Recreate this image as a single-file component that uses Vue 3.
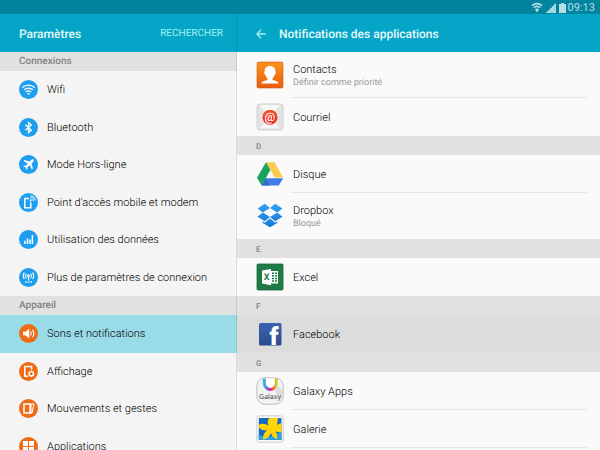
<script setup>
const groups = [
  {
    title: 'Connexions',
    tone: 'blue',
    items: [
      { icon: 'wifi', label: 'Wifi' },
      { icon: 'bluetooth', label: 'Bluetooth' },
      { icon: 'plane', label: 'Mode Hors-ligne' },
      { icon: 'hotspot', label: "Point d'accès mobile et modem" },
      { icon: 'data', label: 'Utilisation des données' },
      { icon: 'more', label: 'Plus de paramètres de connexion' }
    ]
  },
  {
    title: 'Appareil',
    tone: 'orange',
    items: [
      { icon: 'sound', label: 'Sons et notifications', active: true },
      { icon: 'display', label: 'Affichage' },
      { icon: 'motion', label: 'Mouvements et gestes' },
      { icon: 'apps', label: 'Applications' }
    ]
  }
]

const sections = [
  {
    letter: '',
    apps: [
      { icon: 'contacts', name: 'Contacts', note: 'Définir comme priorité' },
      { icon: 'mail', name: 'Courriel' }
    ]
  },
  {
    letter: 'D',
    apps: [
      { icon: 'drive', name: 'Disque' },
      { icon: 'dropbox', name: 'Dropbox', note: 'Bloqué' }
    ]
  },
  { letter: 'E', apps: [{ icon: 'excel', name: 'Excel' }] },
  { letter: 'F', apps: [{ icon: 'facebook', name: 'Facebook', active: true }] },
  {
    letter: 'G',
    apps: [
      { icon: 'galaxy', name: 'Galaxy Apps' },
      { icon: 'gallery', name: 'Galerie' }
    ]
  }
]
</script>

<template>
  <div class="screen">
    <div class="status">
      <svg class="status-wifi" viewBox="0 0 12 11" aria-hidden="true">
        <path d="M1 3.6Q6 -.4 11 3.6" fill="none" stroke="#b4dde4" stroke-width="1.8" />
        <path d="M2.6 5.7Q6 3 9.4 5.7" fill="none" stroke="#b4dde4" stroke-width="1.7" />
        <path d="M4 7.3Q6 5.8 8 7.3L6 10.5Z" fill="#b4dde4" />
      </svg>
      <svg class="status-signal" viewBox="0 0 10 10" aria-hidden="true">
        <path d="M10 0V10H0Z" fill="#8cc9d4" />
        <path d="M1 8.6V10M3 6.8V10M5 5V10M7 3V10M9 1V10" stroke="#b4dde4" stroke-width="1.3" />
      </svg>
      <svg class="status-battery" viewBox="0 0 7 10" aria-hidden="true">
        <path d="M2 0H5V1H7V10H0V1H2Z" fill="#b4dde4" />
      </svg>
      <time>09:13</time>
    </div>

    <div class="panes">
      <nav class="settings">
        <header class="bar settings-bar">
          <h1>Paramètres</h1>
          <button type="button" class="search">RECHERCHER</button>
        </header>
        <section v-for="group in groups" :key="group.title">
          <h2 class="group-title">{{ group.title }}</h2>
          <ul class="menu" :class="group.tone">
            <li v-for="item in group.items" :key="item.label">
              <a href="#" class="menu-item" :class="{ active: item.active }">
                <span class="disc">
                  <svg viewBox="0 0 19 19" fill="none" stroke="#fff" stroke-width="1.3" aria-hidden="true">
                    <template v-if="item.icon === 'wifi'">
                      <path d="M3.2 7.6Q9.5 2.6 15.8 7.6M5 9.8Q9.5 6.3 14 9.8M6.8 11.9Q9.5 9.9 12.2 11.9" />
                      <path d="M8 13.4Q9.5 12.4 11 13.4L9.5 15Z" fill="#fff" stroke="none" />
                    </template>
                    <path v-else-if="item.icon === 'bluetooth'" d="M6.4 6.7L12.3 12.2L9.5 14.6V4.4L12.3 6.9L6.4 12.3" />
                    <path v-else-if="item.icon === 'plane'" fill="#fff" stroke="none" d="M14.6 4.4C13.9 3.8 12.8 4.4 12.1 5.1L10.7 6.5L5.5 5.1L4.5 6.1L8.8 8.5L6.9 10.7L5 10.5L4.2 11.3L6.6 12.5L7.8 14.9L8.6 14.1L8.4 12.2L10.6 10.3L12.9 14.6L13.9 13.6L12.6 8.4L14 7C14.7 6.2 15.2 5.1 14.6 4.4Z" />
                    <template v-else-if="item.icon === 'hotspot'">
                      <path d="M10 5.5H5.8V14.8H11.8V9.5" stroke-width="1.5" />
                      <path d="M11.2 6.4Q12.8 6.5 13 8.1M11.2 4.4Q14.5 4.6 14.9 8.1M11.4 2.6Q16 3 16.6 7.4" stroke-width=".9" />
                      <circle cx="11.2" cy="8" r=".8" fill="#fff" stroke="none" />
                    </template>
                    <path v-else-if="item.icon === 'data'" d="M6 14V10.8M8.5 14V8.6M11 14V9.6M13.4 14V5" stroke-width="1.5" />
                    <template v-else-if="item.icon === 'more'">
                      <path d="M7.3 10.2Q5.9 7.8 7.3 5.5M11.7 10.2Q13.1 7.8 11.7 5.5M5.3 11Q3.3 7.8 5.3 4.5M13.7 11Q15.7 7.8 13.7 4.5" stroke-width="1.1" />
                      <path d="M9.5 8V12.5" />
                      <circle cx="9.5" cy="7.4" r="1.2" fill="#fff" stroke="none" />
                      <path d="M6 14H7.5M8.8 14H10.2M11.5 14H13" stroke-width="1.5" />
                    </template>
                    <template v-else-if="item.icon === 'sound'">
                      <path d="M4 7.8H6.4L10.2 4.5V14.5L6.4 11.3H4Z" fill="#fff" stroke="none" />
                      <path d="M11.6 7.4Q13 9.5 11.6 11.6M13.6 5.9Q16 9.5 13.6 13.1" stroke-width="1.2" />
                    </template>
                    <template v-else-if="item.icon === 'display'">
                      <path d="M12.6 7.5V4.5H5.8V14.2H9" stroke-width="1.5" />
                      <circle cx="12.2" cy="11.8" r="2.2" stroke-width="1.3" />
                      <path d="M12.2 8.5V10M12.2 13.6V15.1M8.9 11.8H10.4M14 11.8H15.5M9.9 9.5L11 10.6M13.4 13L14.5 14.1M14.5 9.5L13.4 10.6M11 13L9.9 14.1" stroke-width=".8" />
                    </template>
                    <template v-else-if="item.icon === 'motion'">
                      <rect x="5" y="5" width="6" height="9" stroke-width="1.5" />
                      <path d="M12 5H14.8L13.2 13.5L12 14.3Z" stroke-width="1.1" />
                    </template>
                    <path v-else fill="#fff" stroke="none" d="M4 4H9V9H4ZM10 4H15V9H10ZM4 10H9V15H4ZM10 10H15V15H10Z" />
                  </svg>
                </span>
                <span class="menu-label">{{ item.label }}</span>
              </a>
            </li>
          </ul>
        </section>
      </nav>

      <main class="detail">
        <header class="bar detail-bar">
          <button type="button" class="back" aria-label="Retour">
            <svg viewBox="0 0 10 10" aria-hidden="true">
              <path d="M5 .8L.9 5L5 9.2M1 5H9.6" fill="none" stroke="#a5f1ee" stroke-width="1.3" />
            </svg>
          </button>
          <h2>Notifications des applications</h2>
        </header>
        <section v-for="section in sections" :key="section.letter">
          <h3 v-if="section.letter" class="letter">{{ section.letter }}</h3>
          <ul class="apps">
            <li v-for="app in section.apps" :key="app.name">
              <a href="#" class="app" :class="{ active: app.active, tall: app.note }">
                <svg class="app-icon" viewBox="0 0 28 28" aria-hidden="true">
                  <g v-if="app.icon === 'contacts'">
                    <defs>
                      <linearGradient id="contactsFill" x2="0" y2="1">
                        <stop stop-color="#f9921e" />
                        <stop offset="1" stop-color="#ee5c0c" />
                      </linearGradient>
                    </defs>
                    <rect x="1" y="1" width="26" height="26" rx="1.5" fill="url(#contactsFill)" stroke="#c95e18" stroke-width=".6" />
                    <path d="M14 5C17.6 5 19.7 7.3 19.4 10.8C20.2 11.2 19.8 13 18.9 13.4C18.4 15.2 17.6 16.4 16.6 17.2V18.7C18.5 19.9 22 19.7 22.6 22.4H5.4C6 19.7 9.5 19.9 11.4 18.7V17.2C10.4 16.4 9.6 15.2 9.1 13.4C8.2 13 7.8 11.2 8.6 10.8C8.3 7.3 10.4 5 14 5Z" fill="#fff" />
                  </g>
                  <g v-else-if="app.icon === 'mail'">
                    <rect x="1" y="1" width="26" height="26" rx="2.5" fill="#ececec" stroke="#c4c4c4" stroke-width=".8" />
                    <path d="M2 3L12 14L2 25Z" fill="#e2e2e2" />
                    <path d="M26 3L16 14L26 25Z" fill="#e2e2e2" />
                    <path d="M2.5 1.6H25.5L14 14Z" fill="#f9f9f9" stroke="#cfcfcf" stroke-width=".6" />
                    <path d="M2.5 26L14 14L25.5 26Z" fill="#f5f5f5" stroke="#cfcfcf" stroke-width=".6" />
                    <circle cx="14" cy="14.3" r="7.4" fill="#f0281a" />
                    <path d="M6.6 14.3A7.4 7.4 0 0 1 21.4 14.3Z" fill="#f6482a" />
                    <text x="14" y="17.6" text-anchor="middle" font-size="12" font-weight="500" fill="#fff">@</text>
                  </g>
                  <g v-else-if="app.icon === 'drive'">
                    <path d="M10 2.3H18.5L27 17.6H18.7Z" fill="#fdcc48" />
                    <path d="M10 2.3L14.3 9.9L5.7 25.6L1 17.8Z" fill="#1aa260" />
                    <path d="M9.7 18.2H27.2L22.8 25.6H5.7Z" fill="#3f7ee8" />
                    <path d="M5.7 25.6L9.7 18.2L14 25.6Z" fill="#3269c8" />
                  </g>
                  <g v-else-if="app.icon === 'dropbox'">
                    <defs>
                      <linearGradient id="boxFill" x2="0" y2="1">
                        <stop stop-color="#35a1f2" />
                        <stop offset="1" stop-color="#1278d8" />
                      </linearGradient>
                    </defs>
                    <path d="M8.8 1.8L14 6.1L6.8 10.6L1.5 6.4ZM19.2 1.8L14 6.1L21.2 10.6L26.5 6.4ZM1.5 14.8L6.8 10.6L14 15L8.8 19.3ZM26.5 14.8L21.2 10.6L14 15L19.2 19.3ZM6.7 19.3L8.8 20.7L14 16.4L19.2 20.7L21.3 19.3V20.9L14 25.3L6.7 20.9Z" fill="url(#boxFill)" />
                  </g>
                  <g v-else-if="app.icon === 'excel'">
                    <rect x="1" y="1" width="26" height="26" rx="1" fill="#1f7a45" stroke="#17683a" stroke-width=".8" />
                    <rect x="14.5" y="8" width="7.5" height="12.5" fill="#fff" />
                    <path d="M16 10.2H18M19 10.2H21M16 12.8H18M19 12.8H21M16 15.4H18M19 15.4H21M16 18H18M19 18H21" stroke="#1f7a45" stroke-width="1.5" />
                    <path d="M6 7.6L15 5.9V22.3L6 20.6Z" fill="#fff" />
                    <text x="10.5" y="17.4" text-anchor="middle" font-size="9" font-weight="700" fill="#1f7a45">X</text>
                  </g>
                  <g v-else-if="app.icon === 'facebook'">
                    <defs>
                      <linearGradient id="fbFill" x2="0" y2="1">
                        <stop stop-color="#3c62ae" />
                        <stop offset="1" stop-color="#2c4b8f" />
                      </linearGradient>
                    </defs>
                    <rect x="3" y="3" width="22.5" height="22.5" rx="1.5" fill="url(#fbFill)" />
                    <text x="18" y="25" text-anchor="middle" font-size="25" font-weight="900" fill="#fff">f</text>
                  </g>
                  <g v-else-if="app.icon === 'galaxy'">
                    <defs>
                      <linearGradient id="handleFill">
                        <stop stop-color="#2fb6e6" />
                        <stop offset=".3" stop-color="#8a4fd0" />
                        <stop offset=".55" stop-color="#e8259a" />
                        <stop offset=".8" stop-color="#f5781e" />
                        <stop offset="1" stop-color="#c8d42a" />
                      </linearGradient>
                    </defs>
                    <rect x=".8" y=".8" width="26.4" height="26.4" rx="8" fill="#f3f3f3" stroke="#b9b9b9" stroke-width=".9" />
                    <path d="M18.5 12.5L21.8 9L26.8 14V19L24 23.5Z" fill="#dcdcdc" />
                    <path d="M8.3 1.6V6.4A6 6 0 0 0 20.3 6.4V1.6" fill="#fff" stroke="url(#handleFill)" stroke-width="3" />
                    <text x="14" y="21.5" text-anchor="middle" font-size="7" font-family="Open Sans, sans-serif" fill="#333">Galaxy</text>
                  </g>
                  <g v-else>
                    <rect x=".8" y=".8" width="26.4" height="26.4" rx="2.5" fill="#f8f8f8" stroke="#c3c3c3" stroke-width=".8" />
                    <rect x="2.8" y="3" width="22.6" height="22" fill="#1669c5" />
                    <path d="M25.4 15V25H2.8V20Q17 25 25.4 15Z" fill="#2f9de4" />
                    <path d="M13.6 3H22L21 10L25.4 8V17.5L19.5 16.5Q22 20 21 24Q16 22.5 15 18Q13 23.5 6.8 24.5Q7 18 11.5 15Q6 16 2.8 12.5V9.8Q7 7.5 12.5 10.5Q10.5 6 13.6 3Z" fill="#ffd800" />
                    <path d="M15 14.5L19 3M15 14.5L3.5 11.5M15 14.5L8 23M15 14.5L20 22M15 14.5L25 12" fill="none" stroke="#fbc400" stroke-width=".8" />
                  </g>
                </svg>
                <span class="app-text">
                  <span>{{ app.name }}</span>
                  <small v-if="app.note">{{ app.note }}</small>
                </span>
              </a>
            </li>
          </ul>
        </section>
      </main>
    </div>
  </div>
</template>

<style>
body {
  margin: 0;
}
</style>

<style scoped>
.screen {
  display: flex;
  flex-direction: column;
  height: 100vh;
  overflow: hidden;
  background: #fafafa;
  color: #222;
  font-family: Roboto, "Noto Sans", sans-serif;
  font-size: 11px;
  line-height: 14px;
  text-rendering: geometricPrecision;
}

h1,
h2,
h3,
ul {
  margin: 0;
  padding: 0;
  font-size: inherit;
  list-style: none;
}

a {
  color: inherit;
  text-decoration: none;
}

button {
  padding: 0;
  border: 0;
  background: none;
  font: inherit;
  text-rendering: inherit;
  cursor: pointer;
}

svg {
  display: block;
}

.status {
  display: flex;
  flex: none;
  align-items: center;
  justify-content: flex-end;
  gap: 3px;
  height: 14px;
  padding-top: 1px;
  padding-right: 5px;
  box-sizing: border-box;
  background: #02849f;
  color: #b4dde4;
}

.status-wifi {
  width: 12px;
  height: 11px;
}

.status-signal {
  width: 10px;
  height: 10px;
}

.status-battery {
  width: 7px;
  height: 10px;
}

.status time {
  margin-left: -1px;
}

.panes {
  display: flex;
  flex: 1;
  min-height: 0;
}

.settings {
  position: relative;
  flex: none;
  width: 39.5%;
  overflow: hidden;
  background: #f4f4f4;
}

.settings::after {
  position: absolute;
  inset: 0 0 0 auto;
  width: 1px;
  background: rgba(0, 0, 0, 0.1);
  content: "";
}

.detail {
  flex: 1;
  min-width: 0;
  overflow: hidden;
}

.bar {
  display: flex;
  align-items: center;
  height: 38px;
  padding-top: 2px;
  box-sizing: border-box;
  background: #04a5c6;
  color: #e6f8fb;
  font-size: 12px;
}

.bar h1,
.bar h2 {
  font-weight: 500;
}

.settings-bar {
  justify-content: space-between;
  padding-right: 14px;
  padding-left: 19px;
}

.search {
  color: #a5f1ee;
  font-size: 10px;
}

.detail-bar {
  gap: 13px;
  padding-left: 19px;
}

.back svg {
  width: 10px;
  height: 10px;
}

.group-title,
.letter {
  height: 19px;
  padding-left: 19px;
  background: #e1e1e1;
  color: #808080;
  font-size: 10px;
  font-weight: 500;
  line-height: 20px;
}

.letter {
  font-size: 8px;
  line-height: 21px;
}

.menu {
  display: grid;
  grid-auto-rows: 1fr;
}

.blue {
  height: 225px;
}

.orange {
  height: 150px;
}

.menu-item {
  display: flex;
  align-items: center;
  gap: 9px;
  height: 100%;
  padding-left: 19px;
}

.menu-item.active {
  background: #99dce7;
}

.menu-label,
.app-text {
  padding-top: 1px;
  color: #000;
  font-weight: 300;
}

.disc {
  width: 19px;
  height: 19px;
  border-radius: 50%;
  background: #1e9eee;
}

.orange .disc {
  background: #ee6c16;
}

.app {
  display: flex;
  align-items: center;
  gap: 9px;
  height: 38px;
  padding-left: 19px;
}

.app.tall {
  height: 46px;
}

.app.active {
  background: #dcdcdc;
}

.app-icon {
  flex: none;
  width: 28px;
  height: 28px;
}

.apps li {
  position: relative;
}

.apps li + li::before,
section:last-child li:last-child::after {
  position: absolute;
  top: -1px;
  right: 13px;
  left: 54px;
  height: 1px;
  background: #e7e7e7;
  content: "";
}

.detail section:last-child li:last-child::after {
  top: auto;
  bottom: 0;
}

.settings li::after {
  display: none;
}

.app-text span,
.app-text small {
  display: block;
}

.app-text small {
  color: #999;
  font-size: 9px;
  font-weight: 400;
  line-height: 12px;
}
</style>
